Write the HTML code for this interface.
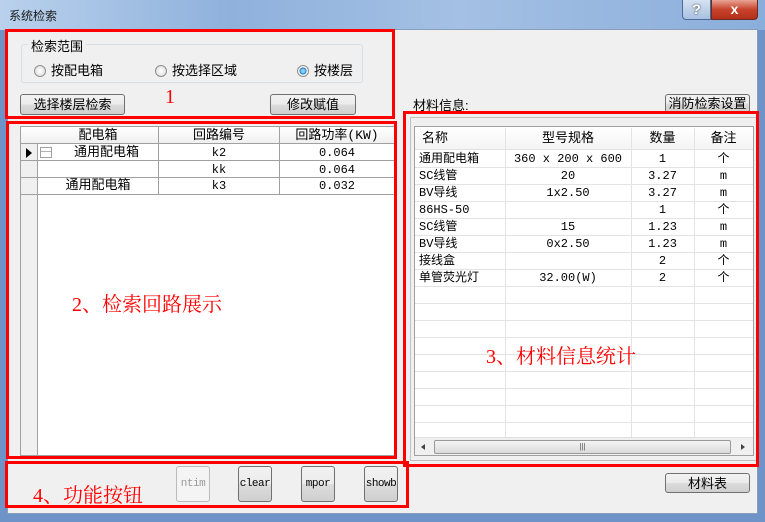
<!DOCTYPE html>
<html><head><meta charset="utf-8"><style>
*{margin:0;padding:0;box-sizing:border-box}
body{width:765px;height:522px;overflow:hidden;background:#6d93c9;font-family:"Liberation Sans","Noto Sans CJK SC",sans-serif;font-size:12px;color:#000;position:relative}
.a{position:absolute}
.title{left:0;top:0;width:765px;height:30px;background:linear-gradient(90deg,#b9d1ec,#8fb1dc 30%,#a4c0e4 60%,#8aaedb);}
.client{left:7px;top:29px;width:751px;height:485px;background:#f0f0f0;border:1px solid #8a9db8}
.red{position:absolute;border:3px solid #ff0000}
.btn{position:absolute;border:1px solid #707070;border-radius:3px;background:linear-gradient(#f2f2f2,#ebebeb 50%,#dcdcdc 51%,#cfcfcf);text-align:center;font-size:13px;line-height:20px}
.rl{position:absolute;font-size:13px;top:60px}
.radio{display:inline-block;width:12px;height:12px;border-radius:50%;border:1px solid #8e8f8f;background:radial-gradient(#fff,#d8d8d8);vertical-align:-2px;margin-right:5px}
.cell{position:absolute;text-align:center;font-family:"Liberation Mono","Noto Sans CJK SC",monospace;font-size:12px;line-height:16px;height:17px}
.hl{position:absolute;background:#e3e3e3;height:1px}
.vl{position:absolute;background:#e3e3e3;width:1px}
.lbl{position:absolute;color:#ff0000;font-family:"Liberation Serif","Noto Serif CJK SC",serif;font-size:20px}
.fb{font-family:'Liberation Mono',monospace;font-size:11px;letter-spacing:-0.5px;overflow:hidden;white-space:nowrap}
</style></head><body>
<div class="a title"></div>
<div class="a" style="left:9px;top:7px;font-size:12px;color:#1a1a1a">系统检索</div>
<div class="a" style="left:682px;top:0;width:29px;height:20px;border:1px solid #4b6a97;border-top:none;border-radius:0 0 0 4px;background:linear-gradient(#d4e2f3,#a9c0e0);color:#fff;font-weight:bold;text-align:center;line-height:19px;font-size:14px;text-shadow:0 0 2px #333">?</div>
<div class="a" style="left:711px;top:0;width:47px;height:20px;border:1px solid #6b2a20;border-top:none;border-radius:0 0 4px 0;background:linear-gradient(#e8a394,#c7432b 50%,#b5301b);color:#fff;font-weight:bold;text-align:center;line-height:19px;font-size:14px">x</div>
<div class="a client"></div>

<div class="a" style="left:21px;top:44px;width:342px;height:39px;border:1px solid #d5dfe5;border-radius:3px"></div>
<div class="a" style="left:28px;top:36px;background:#f0f0f0;padding:0 3px;font-size:13px">检索范围</div>
<div class="rl" style="left:34px"><span class="radio"></span>按配电箱</div>
<div class="rl" style="left:155px"><span class="radio"></span>按选择区域</div>
<div class="rl" style="left:297px"><span class="radio" style="background:radial-gradient(#7fd0ff 25%,#1c6fb8 45%,#fff 55%,#ddd)"></span>按楼层</div>
<div class="btn" style="left:20px;top:94px;width:105px;height:21px">选择楼层检索</div>
<div class="btn" style="left:270px;top:94px;width:86px;height:21px">修改赋值</div>
<div class="lbl" style="left:165px;top:86px">1</div>
<div class="red" style="left:5px;top:29px;width:390px;height:90px"></div>

<div class="a" style="left:20px;top:126px;width:375px;height:330px;background:#fff;border:1px solid #a0a0a0"></div>
<div class="a" style="left:21px;top:127px;width:17px;height:328px;background:#f0f0f0;border-right:1px solid #a0a0a0"></div>
<div class="a" style="left:21px;top:127px;width:373px;height:17px;background:linear-gradient(#fff,#f0f0f0);border-bottom:1px solid #a0a0a0"></div>
<div class="a" style="left:158px;top:127px;width:1px;height:67px;background:#a0a0a0"></div>
<div class="a" style="left:279px;top:127px;width:1px;height:67px;background:#a0a0a0"></div>
<div class="a" style="left:38px;top:160px;width:356px;height:1px;background:#a0a0a0"></div>
<div class="a" style="left:38px;top:177px;width:356px;height:1px;background:#a0a0a0"></div>
<div class="a" style="left:21px;top:194px;width:373px;height:1px;background:#a0a0a0"></div>
<div class="a" style="left:21px;top:160px;width:17px;height:1px;background:#a0a0a0"></div>
<div class="a" style="left:21px;top:177px;width:17px;height:1px;background:#a0a0a0"></div>
<div class="a" style="left:26px;top:148px;width:0;height:0;border-left:6px solid #000;border-top:5px solid transparent;border-bottom:5px solid transparent"></div>
<div class="a" style="left:40px;top:147px;width:12px;height:11px;border:1px solid #a0a0a0;font-size:10px;line-height:8px;text-align:center;color:#888">—</div>
<div class="cell" style="left:38px;top:128px;width:120px;font-size:13px">配电箱</div>
<div class="cell" style="left:159px;top:128px;width:120px;font-size:13px">回路编号</div>
<div class="cell" style="left:280px;top:128px;width:114px;font-size:13px">回路功率(KW)</div>
<div class="cell" style="left:55px;top:145px;width:103px;font-size:13px">通用配电箱</div>
<div class="cell" style="left:159px;top:145px;width:120px">k2</div>
<div class="cell" style="left:280px;top:145px;width:114px">0.064</div>
<div class="cell" style="left:159px;top:162px;width:120px">kk</div>
<div class="cell" style="left:280px;top:162px;width:114px">0.064</div>
<div class="cell" style="left:38px;top:178px;width:120px;font-size:13px">通用配电箱</div>
<div class="cell" style="left:159px;top:178px;width:120px">k3</div>
<div class="cell" style="left:280px;top:178px;width:114px">0.032</div>
<div class="lbl" style="left:72px;top:288px">2、检索回路展示</div>
<div class="red" style="left:6px;top:121px;width:391px;height:338px"></div>

<div class="a" style="left:413px;top:95px;font-size:13px">材料信息:</div>
<div class="btn" style="left:665px;top:94px;width:85px;height:19px;line-height:18px">消防检索设置</div>
<div class="a" style="left:410px;top:117px;width:347px;height:344px;border:1px solid #c0c0c0"></div>
<div class="a" style="left:414px;top:126px;width:340px;height:330px;background:#fff;border:1px solid #a0a0a0"></div>
<div class="a" style="left:415px;top:127px;width:338px;height:23px;background:linear-gradient(#fff,#f4f4f4);border-bottom:1px solid #e0e0e0"></div>
<div id="rg"></div>
<div class="cell" style="left:422px;top:131px;width:60px;text-align:left;font-size:13px">名称</div>
<div class="cell" style="left:505px;top:131px;width:126px;font-size:13px">型号规格</div>
<div class="cell" style="left:631px;top:131px;width:63px;font-size:13px">数量</div>
<div class="cell" style="left:694px;top:131px;width:59px;font-size:13px">备注</div>
<div class="a" style="left:415px;top:437px;width:338px;height:18px;background:#f0f0f0;border-top:1px solid #e0e0e0"></div>
<div class="a" style="left:434px;top:440px;width:297px;height:14px;border:1px solid #9a9a9a;border-radius:2px;background:linear-gradient(#f4f4f4,#dadada);text-align:center;font-size:8px;line-height:12px;color:#555">|||</div>
<div class="a" style="left:421px;top:444px;border-right:4px solid #444;border-top:3px solid transparent;border-bottom:3px solid transparent"></div>
<div class="a" style="left:741px;top:444px;border-left:4px solid #444;border-top:3px solid transparent;border-bottom:3px solid transparent"></div>
<div class="lbl" style="left:486px;top:340px">3、材料信息统计</div>
<div class="red" style="left:403px;top:111px;width:356px;height:356px"></div>
<div class="btn" style="left:665px;top:473px;width:85px;height:20px;line-height:19px">材料表</div>

<div class="lbl" style="left:33px;top:479px">4、功能按钮</div>
<div class="btn fb" style="left:176px;top:466px;width:34px;height:36px;line-height:34px;color:#999;border-color:#bbb;background:#f4f4f4">ntim</div>
<div class="btn fb" style="left:238px;top:466px;width:34px;height:36px;line-height:34px">clear</div>
<div class="btn fb" style="left:301px;top:466px;width:34px;height:36px;line-height:34px">mpor</div>
<div class="btn fb" style="left:364px;top:466px;width:34px;height:36px;line-height:34px">showb</div>
<div class="red" style="left:5px;top:461px;width:404px;height:47px"></div>

<script>
var rows=[["通用配电箱","360 x 200 x 600","1","个"],["SC线管","20","3.27","m"],["BV导线","1x2.50","3.27","m"],["86HS-50","","1","个"],["SC线管","15","1.23","m"],["BV导线","0x2.50","1.23","m"],["接线盒","","2","个"],["单管荧光灯","32.00(W)","2","个"]];
var h="",cols=[[419,86,'left'],[505,126,'center'],[631,63,'center'],[694,59,'center']];
for(var i=0;i<17;i++){var y=151+i*17;h+='<div class="hl" style="left:415px;top:'+(y+16)+'px;width:338px"></div>';
if(i<rows.length)for(var c=0;c<4;c++)h+='<div class="cell" style="left:'+cols[c][0]+'px;top:'+y+'px;width:'+cols[c][1]+'px;text-align:'+cols[c][2]+'">'+rows[i][c]+'</div>';}
[505,631,694].forEach(function(x){h+='<div class="vl" style="left:'+x+'px;top:128px;height:309px"></div>'});
document.getElementById('rg').innerHTML=h;
</script>
</body></html>
